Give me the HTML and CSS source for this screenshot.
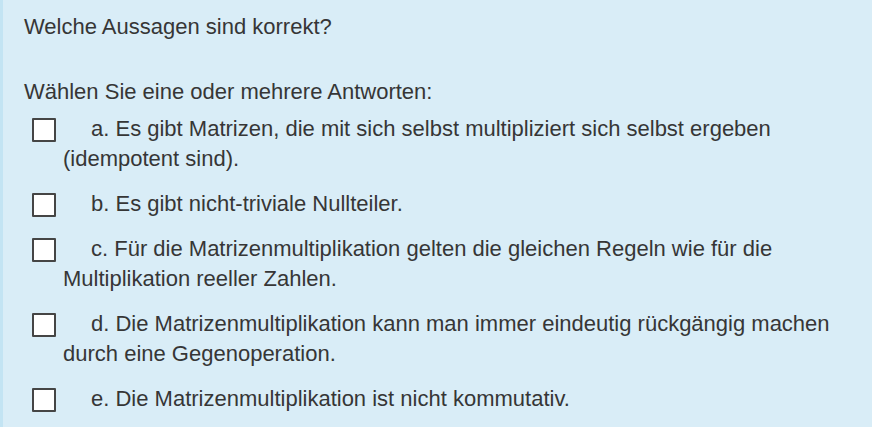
FILE: index.html
```html
<!DOCTYPE html>
<html lang="de">
<head>
<meta charset="utf-8">
<title>Frage</title>
<link rel="stylesheet" href="styles.css">
</head>
<body>
<div class="formulation">
  <div class="qtext">Welche Aussagen sind korrekt?</div>
  <div class="prompt">Wählen Sie eine oder mehrere Antworten:</div>
  <div class="answer">
    <div class="row"><span class="box"></span><span class="lbl">a. Es gibt Matrizen, die mit sich selbst multipliziert sich selbst ergeben (idempotent sind).</span></div>
    <div class="row"><span class="box"></span><span class="lbl">b. Es gibt nicht-triviale Nullteiler.</span></div>
    <div class="row"><span class="box"></span><span class="lbl">c. Für die Matrizenmultiplikation gelten die gleichen Regeln wie für die Multiplikation reeller Zahlen.</span></div>
    <div class="row"><span class="box"></span><span class="lbl">d. Die Matrizenmultiplikation kann man immer eindeutig rückgängig machen durch eine Gegenoperation.</span></div>
    <div class="row"><span class="box"></span><span class="lbl">e. Die Matrizenmultiplikation ist nicht kommutativ.</span></div>
  </div>
</div>
</body>
</html>
```

FILE: styles.css
```css
html, body {
  margin: 0;
  padding: 0;
  background: #d9edf7;
}

.formulation {
  height: 427px;
  box-sizing: border-box;
  background: #d9edf7;
  border-left: 3px solid #c3e4f3;
  padding: 12px 16px 0 21px;
  color: #363636;
  font-family: "Liberation Sans", Arial, sans-serif;
  font-size: 22px;
  line-height: 30px;
}

.qtext {
  margin: 0 0 35px 0;
}

.prompt {
  margin: 0 0 7px 0;
}

.row {
  padding-left: 39px;
  text-indent: -31px;
  margin-bottom: 15px;
}

.box {
  display: inline-block;
  box-sizing: border-box;
  width: 24px;
  height: 24px;
  margin-top: 4px;
  margin-right: 35px;
  vertical-align: top;
  background: #ffffff;
  border: 2px solid #454545;
  border-radius: 1px;
  text-indent: 0;
}
```
